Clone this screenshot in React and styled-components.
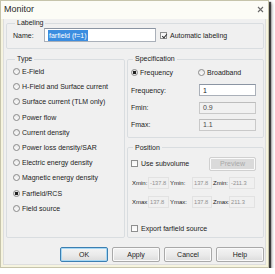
import React from "react";
import styled, { createGlobalStyle } from "styled-components";

const GlobalStyle = createGlobalStyle`
  html, body {
    margin: 0;
    padding: 0;
    background: #ffffff;
  }
  body {
    font-family: "Liberation Sans", Arial, sans-serif;
    font-size: 7px;
    color: #1c1c1c;
  }
`;

const typeOptions = [
  "E-Field",
  "H-Field and Surface current",
  "Surface current (TLM only)",
  "Power flow",
  "Current density",
  "Power loss density/SAR",
  "Electric energy density",
  "Magnetic energy density",
  "Farfield/RCS",
  "Field source",
];

const coords = [
  ["Xmin:", "-137.8", "Ymin:", "137.8", "Zmin:", "-211.3"],
  ["Xmax", "137.8", "Ymax:", "137.8", "Zmax:", "211.3"],
];

const App = () => {
  return (
    <>
      <GlobalStyle />
      <Window>
        <TitleBar>
          <Title>Monitor</Title>
          <Close>
            <svg width="7" height="7" viewBox="0 0 7 7">
              <path d="M1 1L6 6M6 1L1 6" stroke="#6a6a6a" strokeWidth="1.1" />
            </svg>
          </Close>
        </TitleBar>
        <Body>
          <Group>
            <Legend>Labeling</Legend>
            <NameRow>
              <NameLabel>Name:</NameLabel>
              <TextBox $width={112}>
                <Selected>farfield (f=1)</Selected>
              </TextBox>
              <Check>
                <Box $checked />
                Automatic labeling
              </Check>
            </NameRow>
          </Group>

          <Columns>
            <TypeGroup>
              <Legend>Type</Legend>
              <RadioList>
                {typeOptions.map((t) => (
                  <RadioRow key={t}>
                    <Radio $checked={t === "Farfield/RCS"} />
                    {t}
                  </RadioRow>
                ))}
              </RadioList>
            </TypeGroup>

            <RightColumn>
              <SpecGroup>
                <Legend>Specification</Legend>
                <SpecGrid>
                  <RadioRow>
                    <Radio $checked />
                    Frequency
                  </RadioRow>
                  <RadioRow>
                    <Radio />
                    Broadband
                  </RadioRow>
                  <FieldLabel>Frequency:</FieldLabel>
                  <TextBox>1</TextBox>
                  <FieldLabel>Fmin:</FieldLabel>
                  <TextBox $disabled>0.9</TextBox>
                  <FieldLabel>Fmax:</FieldLabel>
                  <TextBox $disabled>1.1</TextBox>
                </SpecGrid>
              </SpecGroup>

              <PositionGroup>
                <Legend>Position</Legend>
                <SubRow>
                  <Check>
                    <Box />
                    Use subvolume
                  </Check>
                  <Button $disabled $width={47} $height={14}>
                    Preview
                  </Button>
                </SubRow>
                <CoordGrid>
                  {coords.flat().map((v, i) =>
                    i % 2 === 0 ? (
                      <CoordLabel key={i}>{v}</CoordLabel>
                    ) : (
                      <Coord key={i}>{v}</Coord>
                    )
                  )}
                </CoordGrid>
                <ExportRow>
                  <Check>
                    <Box />
                    Export farfield source
                  </Check>
                </ExportRow>
              </PositionGroup>
            </RightColumn>
          </Columns>

          <ButtonRow>
            <Button $default>OK</Button>
            <Button>Apply</Button>
            <Button>Cancel</Button>
            <Button>Help</Button>
          </ButtonRow>
        </Body>
      </Window>
    </>
  );
};

const Window = styled.div`
  width: 269px;
  height: 268px;
  box-sizing: border-box;
  display: flex;
  flex-direction: column;
  background: #f6f4df;
  border: 1px solid #c6c4ab;
  padding: 0 2px 2px 2px;
  box-shadow: 2px 2px 1px rgba(20, 20, 20, 0.75), 3px 3px 3px rgba(0, 0, 0, 0.35);
`;

const TitleBar = styled.div`
  height: 18px;
  display: flex;
  align-items: center;
  justify-content: space-between;
  box-sizing: border-box;
  background: #fcfcf6;
  margin: 0 -2px;
  padding: 0 4px 2px 3px;
`;

const Title = styled.span`
  font-size: 9px;
  color: #2a2a2a;
`;

const Close = styled.span`
  display: flex;
  margin-top: 1px;
`;

const Body = styled.div`
  flex: 1;
  background: #f0f0f0;
  border: 1px solid #dedede;
  border-top: none;
  padding: 0 1px 0 2px;
  display: flex;
  flex-direction: column;
`;

const Group = styled.fieldset`
  margin: 0;
  min-width: 0;
  border: 1px solid #d9dde0;
  border-radius: 2px;
  padding: 1px 6px 6px 6px;
`;

const Legend = styled.legend`
  margin-left: 2px;
  padding: 0 2px;
  line-height: 8px;
  font-size: 7px;
  color: #1c1c1c;
`;

const NameRow = styled.div`
  display: flex;
  align-items: center;
  height: 14px;
`;

const NameLabel = styled.span`
  width: 31px;
`;

const TextBox = styled.div`
  box-sizing: border-box;
  width: ${(p) => (p.$width ? `${p.$width}px` : "auto")};
  height: ${(p) => (p.$width ? "14px" : "12px")};
  display: flex;
  align-items: center;
  padding: 0 3px;
  background: ${(p) => (p.$disabled ? "#f1f1f1" : "#ffffff")};
  border: 1px solid ${(p) => (p.$disabled ? "#c9c9c9" : "#aab0b9")};
  border-top-color: ${(p) => (p.$disabled ? "#bdbdbd" : "#8b95a3")};
  color: ${(p) => (p.$disabled ? "#4a4a4a" : "#1c1c1c")};
  overflow: hidden;
  white-space: nowrap;
`;

const Selected = styled.span`
  background: #3b8de0;
  color: #ffffff;
  padding: 1px 1px;
  line-height: 9px;
`;

const Check = styled.label`
  display: flex;
  align-items: center;
  gap: 3px;
  margin-left: 4px;
  white-space: nowrap;
`;

const Box = styled.span`
  width: 7px;
  height: 7px;
  box-sizing: border-box;
  border: 1px solid #8e8f8f;
  background: linear-gradient(#f4f4f4, #ffffff);
  position: relative;
  &::after {
    content: ${(p) => (p.$checked ? "''" : "none")};
    position: absolute;
    left: 1.5px;
    top: 0px;
    width: 2px;
    height: 4px;
    border: solid #333;
    border-width: 0 1px 1px 0;
    transform: rotate(40deg);
  }
`;

const Columns = styled.div`
  display: flex;
  gap: 2px;
  margin-top: 6px;
`;

const TypeGroup = styled(Group)`
  width: 119px;
  box-sizing: border-box;
  padding: 1px 4px 0 6px;
`;

const RadioList = styled.div`
  display: grid;
  grid-auto-rows: 15.2px;
`;

const RadioRow = styled.label`
  display: flex;
  align-items: center;
  gap: 2px;
  white-space: nowrap;
`;

const Radio = styled.span`
  width: 7px;
  height: 7px;
  box-sizing: border-box;
  border-radius: 50%;
  border: 1px solid #8a8a8a;
  background: ${(p) =>
    p.$checked
      ? "radial-gradient(circle, #1f1f1f 0 1.6px, #e6e6e6 2px)"
      : "linear-gradient(#e8e8e8, #fbfbfb)"};
  flex-shrink: 0;
`;

const RightColumn = styled.div`
  flex: 1;
  display: flex;
  flex-direction: column;
  gap: 6px;
`;

const SpecGroup = styled(Group)`
  padding: 2px 7px 6px 3px;
`;

const SpecGrid = styled.div`
  display: grid;
  grid-template-columns: 68px 1fr;
  grid-template-rows: 14px 12px 12px 12px;
  row-gap: 5.3px;
  align-items: center;
  & > :nth-child(2) {
    margin-left: -1px;
  }
`;

const FieldLabel = styled.span`
  white-space: nowrap;
`;

const PositionGroup = styled(Group)`
  padding: 5px 6px 2px 3px;
`;

const SubRow = styled.div`
  display: flex;
  align-items: center;
  justify-content: space-between;
  padding-right: 1px;
  & > label {
    margin-left: 0;
  }
`;

const CoordGrid = styled.div`
  display: grid;
  grid-template-columns: 17px 21px 23px 20px 17px 26px;
  grid-auto-rows: 12px;
  row-gap: 7px;
  align-items: center;
  margin-top: 6px;
`;

const CoordLabel = styled.span`
  font-size: 6px;
  white-space: nowrap;
  padding-left: 1px;
`;

const Coord = styled.div`
  height: 12px;
  box-sizing: border-box;
  display: flex;
  align-items: center;
  padding: 0 1px;
  border: 1px solid #e2e2e2;
  color: #8f8f8f;
  white-space: nowrap;
  font-size: 5.7px;
`;

const ExportRow = styled.div`
  display: flex;
  align-items: center;
  height: 12px;
  margin-top: 15px;
  & > label {
    margin-left: 0;
  }
`;

const ButtonRow = styled.div`
  display: flex;
  justify-content: flex-end;
  gap: 4px;
  margin-top: 9px;
`;

const Button = styled.button`
  width: ${(p) => p.$width || 48}px;
  height: ${(p) => p.$height || 15}px;
  box-sizing: border-box;
  padding: 0;
  font-family: inherit;
  font-size: 7px;
  color: ${(p) => (p.$disabled ? "#a9a9a9" : "#1c1c1c")};
  background: ${(p) =>
    p.$disabled ? "#dadada" : "linear-gradient(#f4f4f4 0%, #ebebeb 50%, #dcdcdc 100%)"};
  border: 1px solid
    ${(p) => (p.$default ? "#3c7fb1" : p.$disabled ? "#d0d0d0" : "#a9a9a9")};
  border-radius: 2px;
  box-shadow: ${(p) => (p.$default ? "inset 0 0 0 1px #a6d8f5" : "inset 0 0 0 1px #fafafa")};
`;

export default App;
